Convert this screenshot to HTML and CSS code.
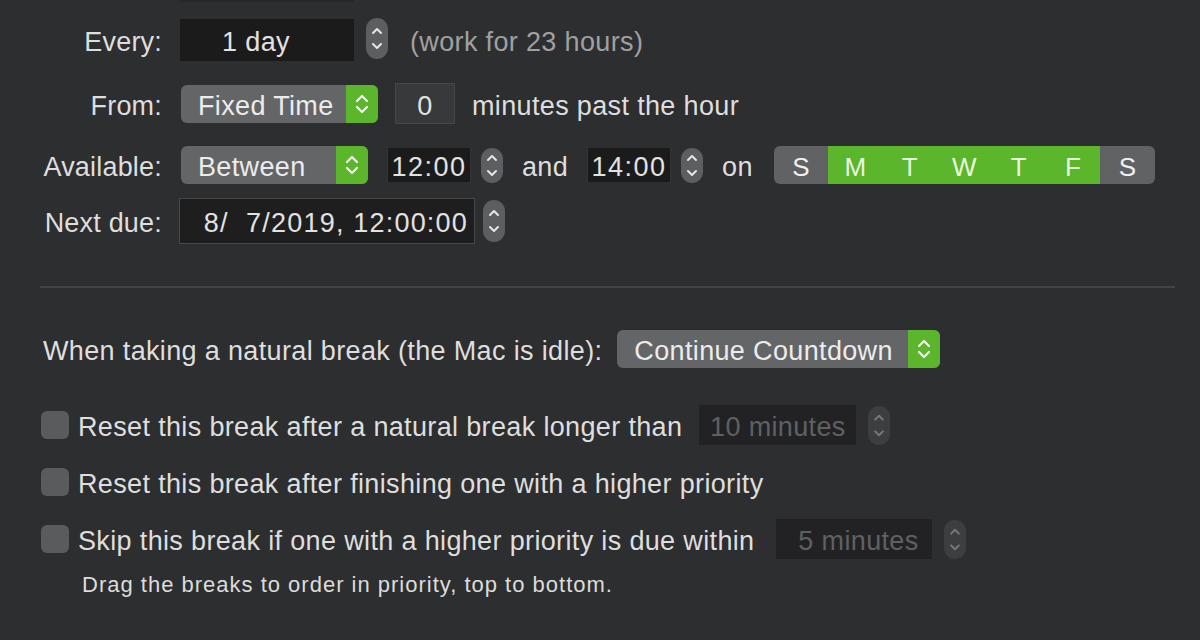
FILE: index.html
```html
<!DOCTYPE html>
<html>
<head>
<meta charset="utf-8">
<link rel="stylesheet" href="styles.css">
</head>
<body>
<div class="pane">
  <div class="top-edge"></div>

  <div class="row r-every">
    <div class="label">Every:</div>
    <div class="field black f-every">1 day</div>
    <div class="stepper s-every"><svg viewBox="0 0 22 41"><path d="M7 15 L11 11 L15 15 M7 26 L11 30 L15 26"/></svg></div>
    <div class="hint">(work for 23 hours)</div>
  </div>

  <div class="row r-from">
    <div class="label">From:</div>
    <div class="popup p-fixed"><span class="ptext">Fixed Time</span><span class="pgreen"><svg viewBox="0 0 32 38"><path d="M11 16 L16 11 L21 16 M11 22 L16 27 L21 22"/></svg></span></div>
    <div class="field gray f-zero">0</div>
    <div class="text">minutes past the hour</div>
  </div>

  <div class="row r-avail">
    <div class="label">Available:</div>
    <div class="popup p-between"><span class="ptext">Between</span><span class="pgreen"><svg viewBox="0 0 32 38"><path d="M11 16 L16 11 L21 16 M11 22 L16 27 L21 22"/></svg></span></div>
    <div class="field black f-time">12:00</div>
    <div class="stepper s-time"><svg viewBox="0 0 22 35"><path d="M7 12 L11 8 L15 12 M7 23 L11 27 L15 23"/></svg></div>
    <div class="text t-and">and</div>
    <div class="field black f-time">14:00</div>
    <div class="stepper s-time"><svg viewBox="0 0 22 35"><path d="M7 12 L11 8 L15 12 M7 23 L11 27 L15 23"/></svg></div>
    <div class="text t-on">on</div>
    <div class="days">
      <span class="day">S</span>
      <span class="day on">M</span>
      <span class="day on">T</span>
      <span class="day on">W</span>
      <span class="day on">T</span>
      <span class="day on">F</span>
      <span class="day">S</span>
    </div>
  </div>

  <div class="row r-next">
    <div class="label">Next due:</div>
    <div class="field black bordered f-date">8/&nbsp;&nbsp;7/2019, 12:00:00</div>
    <div class="stepper s-date"><svg viewBox="0 0 22 42"><path d="M7 15 L11 11 L15 15 M7 27 L11 31 L15 27"/></svg></div>
  </div>

  <div class="sep"></div>

  <div class="row r-natural">
    <div class="text">When taking a natural break (the Mac is idle):</div>
    <div class="popup p-continue"><span class="ptext">Continue Countdown</span><span class="pgreen"><svg viewBox="0 0 32 38"><path d="M11 16 L16 11 L21 16 M11 22 L16 27 L21 22"/></svg></span></div>
  </div>

  <div class="row check r-c1">
    <span class="box"></span>
    <span class="text">Reset this break after a natural break longer than</span>
    <div class="field dim f-min10">10 minutes</div>
    <div class="stepper dimstep"><svg viewBox="0 0 22 40"><path d="M7 14 L11 10 L15 14 M7 26 L11 30 L15 26"/></svg></div>
  </div>

  <div class="row check r-c2">
    <span class="box"></span>
    <span class="text">Reset this break after finishing one with a higher priority</span>
  </div>

  <div class="row check r-c3">
    <span class="box"></span>
    <span class="text">Skip this break if one with a higher priority is due within</span>
    <div class="field dim f-min5">5 minutes</div>
    <div class="stepper dimstep"><svg viewBox="0 0 22 40"><path d="M7 14 L11 10 L15 14 M7 26 L11 30 L15 26"/></svg></div>
  </div>

  <div class="note">Drag the breaks to order in priority, top to bottom.</div>
</div>
</body>
</html>
```

FILE: styles.css
```css
html, body {
  margin: 0;
  padding: 0;
  background: #2d2e30;
  width: 1200px;
  height: 640px;
  overflow: hidden;
}

.pane {
  position: relative;
  font-family: "Liberation Sans", Arial, sans-serif;
  font-size: 27px;
  letter-spacing: 0.35px;
  color: #dedede;
}

.top-edge {
  height: 2px;
  width: 174px;
  margin-left: 180px;
  background: #262729;
}

.row {
  display: flex;
  align-items: center;
}

/* text sits a little low, as in the reference */
.label, .text, .hint, .ptext, .field, .day {
  padding-top: 5px;
  box-sizing: border-box;
}

.label {
  width: 162px;
  text-align: right;
  margin-right: 18px;
  flex: none;
  letter-spacing: 0.2px;
}

.text { white-space: nowrap; }

.field {
  display: flex;
  align-items: center;
  justify-content: center;
  flex: none;
  white-space: nowrap;
}
.field.black { background: #1b1b1c; color: #e2e2e2; }
.field.gray { background: #38393b; border: 1px solid #46474a; color: #e2e2e2; }
.field.bordered { border: 1px solid #47484a; background: #1e1e1f; }
.field.dim { background: #222224; color: #5f6062; }

.stepper {
  flex: none;
  width: 22px;
  border-radius: 11px;
  background: #5d5e60;
  display: flex;
}
.stepper svg { width: 100%; height: 100%; }
.stepper path {
  fill: none;
  stroke: #e6e6e6;
  stroke-width: 2;
  stroke-linecap: round;
  stroke-linejoin: round;
}
.stepper.dimstep { background: #3d3e40; }
.stepper.dimstep path { stroke: #77787a; }

.popup {
  flex: none;
  display: flex;
  align-items: stretch;
  height: 38px;
  border-radius: 6px;
  background: #646567;
  overflow: hidden;
  box-sizing: border-box;
}
.ptext {
  flex: 1;
  display: flex;
  align-items: center;
  padding-left: 17px;
  color: #ececec;
  white-space: nowrap;
}
.pgreen {
  width: 32px;
  background: #5bb62c;
  display: flex;
}
.pgreen svg { width: 32px; height: 100%; }
.pgreen path {
  fill: none;
  stroke: #f4f4f4;
  stroke-width: 2.2;
  stroke-linecap: round;
  stroke-linejoin: round;
}

/* Row: Every */
.r-every { margin-top: 17px; height: 41px; }
.f-every { width: 174px; height: 42px; padding-right: 22px; }
.s-every { height: 41px; margin-left: 12px; margin-top: -3px; }
.hint { margin-left: 22px; color: #a0a0a0; white-space: nowrap; }

/* Row: From */
.r-from { margin-top: 23px; height: 41px; }
.p-fixed { width: 197px; margin-left: 1px; }
.f-zero { width: 60px; height: 41px; margin-left: 17px; }
.r-from .text { margin-left: 17px; }

/* Row: Available */
.r-avail { margin-top: 22px; height: 38px; }
.p-between { width: 187px; margin-left: 1px; }
.f-time {
  width: 84px;
  height: 34px;
  margin-left: 19px;
  letter-spacing: 1.5px;
  border-left: 1px solid #333436;
  border-right: 1px solid #333436;
}
.s-time { height: 35px; margin-left: 10px; }
.t-and { margin-left: 19px; }
.t-and + .f-time { margin-left: 19px; }
.t-on { margin-left: 19px; }

.days {
  margin-left: 21px;
  display: flex;
  width: 381px;
  height: 38px;
  border-radius: 6px;
  overflow: hidden;
  background: #616264;
}
.day {
  flex: 1;
  display: flex;
  align-items: center;
  justify-content: center;
  color: #f0f0f0;
  font-size: 26px;
}
.day.on { background: #5bb62c; color: #e8f7df; }

/* Row: Next due */
.r-next { margin-top: 14px; height: 46px; }
.r-next .label { margin-right: 17px; }
.f-date {
  width: 296px;
  height: 46px;
  justify-content: flex-end;
  padding-right: 6px;
  letter-spacing: 1.2px;
}
.s-date { height: 42px; margin-left: 8px; }

.sep {
  margin: 42px 25px 0 40px;
  height: 2px;
  background: #434446;
}

/* Natural break */
.r-natural { margin-top: 42px; height: 38px; padding-left: 43px; }
.p-continue { width: 323px; margin-left: 15px; }

/* Checkbox rows */
.check { padding-left: 41px; height: 40px; }
.r-c1 { margin-top: 37px; }
.r-c2 { margin-top: 17px; }
.r-c3 { margin-top: 17px; }

.box {
  flex: none;
  width: 28px;
  height: 28px;
  border-radius: 6px;
  background: #5a5b5d;
  margin-right: 9px;
}

.f-min10 { width: 157px; height: 40px; margin-left: 17px; }
.f-min5 { width: 156px; height: 40px; margin-left: 22px; padding-left: 8px; }
.dimstep { height: 39px; margin-left: 12px; }

.note {
  margin-top: 13px;
  padding-left: 82px;
  font-size: 22px;
  letter-spacing: 1px;
  line-height: 26px;
  color: #dcdcdc;
}
```
